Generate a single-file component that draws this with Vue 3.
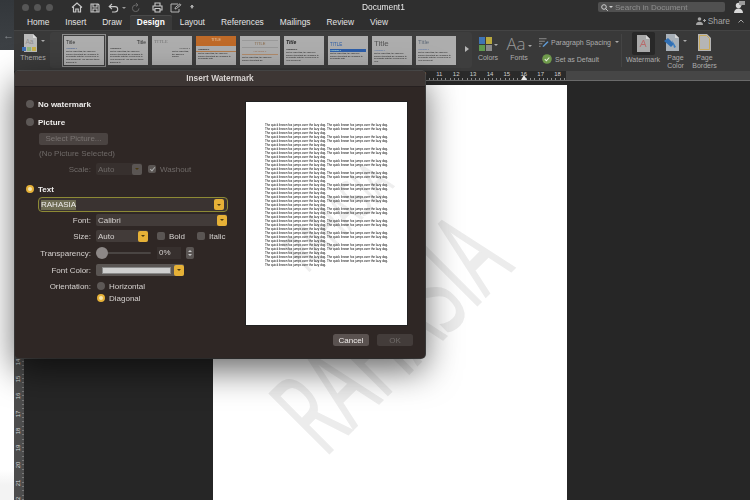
<script setup>
const tabs = ['Home', 'Insert', 'Draw', 'Design', 'Layout', 'References', 'Mailings', 'Review', 'View']
const body = 'On the Insert tab, the galleries include items that are designed to coordinate with the overall look of your document. You can use these galleries to insert tables, headers, footers, lists, cover pages and other blocks.'
// cut the sample text at a word so it fits inside the thumbnail
const excerpt = (len) => body.slice(0, body.lastIndexOf(' ', len))
const themes = [
  { key: 't1', title: 'Title', head: 'Heading 1', len: 150 },
  { key: 't2', title: 'Title', head: 'Heading 1', len: 150 },
  { key: 't3', title: 'TITLE', head: 'Heading 1', len: 45 },
  { key: 't4', title: 'TITLE', head: 'Heading 1', len: 85 },
  { key: 't5', title: 'TITLE', head: 'HEADING 1', len: 60 },
  { key: 't6', title: 'Title', head: 'Heading 1', len: 120 },
  { key: 't7', title: 'TITLE', head: 'Heading 1', len: 85 },
  { key: 't8', title: 'Title', head: 'Heading 1', len: 110 },
  { key: 't9', title: 'Title', head: 'Heading 1', len: 120 },
]
const sideRuler = [14, 15, 16, 17, 18, 19, 20, 21, 22]
const topRuler = [10, 11, 12, 13, 14, 15, 16, 17, 18]
const sentence = 'The quick brown fox jumps over the lazy dog. '
const paragraph = sentence.repeat(5)
</script>

<template>
  <div class="screen">
    <div class="behind">
      <div class="behind-top"><span class="back">←</span></div>
    </div>

    <div class="word">
      <div class="titlebar">
        <div class="lights"><i></i><i></i><i></i></div>
        <div class="quick">
          <svg width="12" height="11" viewBox="0 0 12 11" class="q-home"><path d="M1 5.500 6 1l5 4.500M2.500 5v5h2.300V7h2.400v3h2.300V5" fill="none" stroke="#c9c9c9" stroke-width="1.200"/></svg>
          <svg width="10" height="10" viewBox="0 0 10 10" class="q-save"><path d="M1 1h7l1 1v7H1zM3 1v3h4V1M3 9V6h4v3" fill="none" stroke="#c9c9c9" stroke-width="1.100"/></svg>
          <svg width="11" height="10" viewBox="0 0 11 10" class="q-undo"><path d="M4 1 1.200 3.600 4 6.200M1.500 3.600H7a2.700 2.700 0 0 1 0 5.400H4" fill="none" stroke="#c9c9c9" stroke-width="1.100"/></svg>
          <span class="q-caret"></span>
          <svg width="9" height="11" viewBox="0 0 9 11" class="q-redo"><path d="M5 1 7 3 5 4.500M6.800 3H4.500a3.300 3.300 0 1 0 3.500 3.400" fill="none" stroke="#6a6a6a" stroke-width="1"/></svg>
          <svg width="11" height="11" viewBox="0 0 11 11" class="q-print"><path d="M3 4V1h5v3M3 8H1V4h9v4H8M3 6.500h5V10H3z" fill="none" stroke="#c9c9c9" stroke-width="1.100"/></svg>
          <svg width="12" height="10" viewBox="0 0 12 10" class="q-edit"><path d="M8 1H1v8h8V6M5 6l.4-1.600L10 .8l1 1L6.500 5.600z" fill="none" stroke="#b5b5b5" stroke-width="1"/></svg>
          <span class="q-more"></span>
        </div>
        <div class="doc-name">Document1</div>
        <div class="search">
          <svg width="7" height="7" viewBox="0 0 7 7"><circle cx="3" cy="3" r="2.300" fill="none" stroke="#d0d0d0"/><path d="M4.700 4.700 6.800 6.800" stroke="#d0d0d0"/></svg>
          <span class="q-caret light"></span>
          <span>Search in Document</span>
        </div>
        <svg class="person" width="11" height="12" viewBox="0 0 11 12"><circle cx="4.500" cy="4.500" r="2.700" fill="#d8d8d8"/><path d="M0 12c0-3 2-4.500 4.500-4.500S9 9 9 12z" fill="#d8d8d8"/><path d="M5 0h6v4H8L6.500 5.500V4H5z" fill="#9a9a9a"/></svg>
      </div>

      <div class="tabbar">
        <span v-for="tab in tabs" :key="tab" class="tab" :class="{ active: tab === 'Design' }">{{ tab }}</span>
        <div class="share">
          <svg width="10" height="8" viewBox="0 0 10 8"><circle cx="3.500" cy="2" r="1.800" fill="#a5a5a5"/><path d="M0 8c0-2.500 1.500-3.200 3.500-3.200S7 5.500 7 8z" fill="#a5a5a5"/><path d="M7 3.500h3M8.500 2v3" stroke="#a5a5a5"/></svg>
          <span>Share</span>
          <svg class="chev" width="6" height="4" viewBox="0 0 6 4"><path d="M.5 3.500 3 1l2.500 2.500" fill="none" stroke="#a5a5a5"/></svg>
        </div>
      </div>

      <div class="ribbon">
        <div class="rgroup themes">
          <div class="ricon">
            <svg width="18" height="18" viewBox="0 0 18 18">
              <path d="M3 0h9l4 4v14H3z" fill="#b9b9b9"/><path d="M12 0v4h4" fill="#dcdcdc"/>
              <text x="4.500" y="10" font-size="6.500" fill="#8d8d8d" font-family="Liberation Sans, sans-serif">Aa</text>
              <rect x="1" y="13" width="4" height="4" fill="#3f6fb5"/><rect x="6" y="13" width="4" height="4" fill="#8fb47c"/><rect x="11" y="13" width="4" height="4" fill="#c8b04c"/>
            </svg>
            <span class="caret"></span>
          </div>
          <span class="rlabel">Themes</span>
        </div>

        <div class="gallery">
          <div v-for="t in themes" :key="t.key" class="thumb" :class="t.key">
            <div class="th-title">{{ t.title }}</div>
            <div class="th-head">{{ t.head }}</div>
            <div class="th-body">{{ excerpt(t.len) }}</div>
          </div>
          <span class="next"></span>
        </div>

        <div class="rgroup colors">
          <div class="ricon">
            <span class="swatches"><i class="s1"></i><i class="s2"></i><i class="s3"></i><i class="s4"></i></span>
            <span class="caret"></span>
          </div>
          <span class="rlabel">Colors</span>
        </div>

        <div class="rgroup fonts">
          <div class="ricon"><span class="aa">Aa</span><span class="caret"></span></div>
          <span class="rlabel">Fonts</span>
        </div>

        <div class="para">
          <div class="para-row">
            <svg width="12" height="11" viewBox="0 0 12 11"><path d="M0 1h9M0 4h7M0 7h4M0 10h2" stroke="#9a9a9a"/><path d="M4 10 10 4l1.500 1L5.500 10.800z" fill="#5f9bd6"/></svg>
            <span>Paragraph Spacing</span>
            <span class="caret"></span>
          </div>
          <div class="para-row second">
            <svg width="10" height="10" viewBox="0 0 10 10"><circle cx="5" cy="5" r="4.800" fill="#6f9a4c"/><path d="M2.800 5.200 4.400 6.800 7.300 3.500" fill="none" stroke="#e6f0dd" stroke-width="1.100"/></svg>
            <span>Set as Default</span>
          </div>
        </div>

        <div class="divider"></div>

        <div class="rgroup mark">
          <div class="mark-box">
            <svg width="13" height="17" viewBox="0 0 13 17"><path d="M0 0h9l4 4v13H0z" fill="#a9a9a9"/><path d="M9 0v4h4" fill="#d4d4d4"/><path d="M3 12 6.500 5 9 12M4 9.500h4" fill="none" stroke="#b86a6a"/></svg>
          </div>
          <span class="rlabel">Watermark</span>
        </div>

        <div class="rgroup pcolor">
          <div class="ricon">
            <svg width="15" height="17" viewBox="0 0 15 17"><path d="M2 0h9l4 4v13H2z" fill="#a8b0b8"/><path d="M11 0v4h4" fill="#d6d6d6"/><path d="M0 7l4-3 6 6-3 3z" fill="#2f6fb5"/><path d="M8 6l4 7-2 1z" fill="#3a7cc0"/></svg>
            <span class="caret"></span>
          </div>
          <span class="rlabel">Page<br>Color</span>
        </div>

        <div class="rgroup pborder">
          <div class="ricon">
            <svg width="13" height="17" viewBox="0 0 13 17"><path d="M0 0h9l4 4v13H0z" fill="#b5b5b5"/><path d="M1.500 1.500h7l3 3v11h-10z" fill="none" stroke="#c9a95a"/></svg>
          </div>
          <span class="rlabel">Page<br>Borders</span>
        </div>
      </div>

      <div class="hruler">
        <div class="hruler-dark">
          <span v-for="n in topRuler" :key="n" class="hcell">{{ n }}</span>
          <span class="marker"></span>
        </div>
      </div>

      <div class="workspace">
        <div class="vruler">
          <div v-for="n in sideRuler" :key="n" class="vcell"><span>{{ n }}</span></div>
        </div>
        <div class="canvas">
          <div class="page">
            <div class="stamp">RAHASIA</div>
          </div>
        </div>
      </div>
    </div>

    <div class="dialog">
      <div class="dlg-title">Insert Watermark</div>
      <div class="dlg-body">
        <div class="form">
          <div class="row r-none"><span class="radio"></span><b>No watermark</b></div>
          <div class="row r-picture"><span class="radio"></span><b>Picture</b></div>
          <div class="btn-select">Select Picture...</div>
          <div class="no-picture">(No Picture Selected)</div>
          <div class="row r-scale dim">
            <label class="lbl">Scale:</label>
            <div class="select sel-scale"><span>Auto</span><span class="arrow grey"><em></em></span></div>
            <span class="check on"></span><span>Washout</span>
          </div>

          <div class="row r-text"><span class="radio on"></span><b>Text</b></div>
          <div class="text-input"><span class="sel-text">RAHASIA</span><span class="arrow"><em></em></span></div>

          <div class="row r-font">
            <label class="lbl">Font:</label>
            <div class="select sel-font"><span>Calibri</span><span class="arrow"><em></em></span></div>
          </div>
          <div class="row r-size">
            <label class="lbl">Size:</label>
            <div class="select sel-size"><span>Auto</span><span class="arrow"><em></em></span></div>
            <span class="check c-bold"></span><span>Bold</span>
            <span class="check c-italic"></span><span>Italic</span>
          </div>
          <div class="row r-trans">
            <label class="lbl">Transparency:</label>
            <div class="slider"><span class="thumb-knob"></span></div>
            <div class="percent">0%</div>
            <div class="stepper"><i></i><i class="down"></i></div>
          </div>
          <div class="row r-color">
            <label class="lbl">Font Color:</label>
            <div class="select sel-color"><span class="color-bar"></span><span class="arrow"><em></em></span></div>
          </div>
          <div class="row r-orient">
            <label class="lbl">Orientation:</label>
            <span class="radio"></span><span>Horizontal</span>
          </div>
          <div class="row r-diag">
            <span class="lbl"></span>
            <span class="radio on"></span><span>Diagonal</span>
          </div>
        </div>

        <div class="side">
          <div class="preview">
            <div class="stamp small">RAHASIA</div>
            <p v-for="n in 12" :key="n">{{ paragraph }}</p>
          </div>
          <div class="actions">
            <button class="cancel">Cancel</button>
            <button class="ok">OK</button>
          </div>
        </div>
      </div>
    </div>
  </div>
</template>

<style>
html, body { margin: 0; background: #fff; }
</style>

<style scoped>
.screen {
  position: relative;
  display: flex;
  width: 750px;
  height: 500px;
  overflow: hidden;
  font-family: "Liberation Sans", Arial, sans-serif;
  filter: blur(0.4px);
}

.behind { width: 14px; background: linear-gradient(#fff 470px, #f3f3f3 485px); }
.behind-top { height: 50px; background: linear-gradient(#33373b, #3d4145); position: relative; }
.back { position: absolute; left: 3px; top: 29px; font-size: 11px; color: #8b8f93; }

.word { flex: 1; display: flex; flex-direction: column; min-width: 0; }

.titlebar { height: 15px; background: #2f2f2f; display: flex; align-items: center; position: relative; }
.lights { display: flex; gap: 5px; padding-left: 8px; }
.lights i { width: 7px; height: 7px; border-radius: 50%; background: #565656; }
.quick { display: flex; align-items: center; margin-left: 18px; }
.q-save { margin-left: 7px; }
.q-undo { margin-left: 8px; }
.q-caret { margin-left: 3px; border: 2px solid transparent; border-top: 2.500px solid #9b9b9b; border-bottom: 0; }
.q-caret.light { border-top-color: #d0d0d0; margin-left: 1px; margin-right: 2px; }
.q-redo { margin-left: 5px; }
.q-print { margin-left: 12px; }
.q-edit { margin-left: 7px; }
.q-more { margin-left: 8px; border: 2px solid transparent; border-top: 3px solid #aaa; border-bottom: 0; box-shadow: 0 -2px 0 -1px #aaa; }
.doc-name { position: absolute; left: 348px; top: 2px; font-size: 8.400px; line-height: 11px; color: #ededed; }
.search {
  position: absolute; left: 584px; top: 2px; width: 127px; height: 10px; box-sizing: border-box;
  display: flex; align-items: center; padding-left: 3px; border-radius: 2px;
  background: #505050; color: #8f8f8f; font-size: 8px;
}
.person { position: absolute; left: 720px; top: 1px; }

.tabbar { height: 15px; background: #2f2f2f; display: flex; align-items: flex-end; padding-left: 5px; position: relative; }
.tab { padding: 0 8px; height: 15px; line-height: 14px; font-size: 8.400px; color: #e4e4e4; box-sizing: border-box; }
.tab.active { background: #3a3a3a; color: #fff; font-weight: 700; border-radius: 2px 2px 0 0; box-shadow: inset 0 1px 0 #4a4a4a; padding: 0 7px; }
.share { position: absolute; right: 6px; top: 1px; display: flex; align-items: center; gap: 2px; color: #a5a5a5; font-size: 8.400px; }
.chev { margin-left: 6px; }

.ribbon { height: 41px; background: #393939; border-top: 1px solid #444; box-sizing: border-box; display: flex; }
.rgroup { display: flex; flex-direction: column; align-items: center; }
.ricon { height: 20px; margin-top: 3px; display: flex; align-items: flex-start; }
.rlabel { font-size: 7px; line-height: 7.500px; text-align: center; color: #adadad; white-space: nowrap; }
.caret { margin: 6px 0 0 2px; border: 2px solid transparent; border-top: 2.500px solid #aaa; border-bottom: 0; }

.themes { width: 30px; margin-left: 4px; }
.gallery {
  width: 422px; height: 36px; margin: 1px 0 0 2px; background: #3e3e3e; border-radius: 3px;
  display: flex; align-items: center; gap: 4px; padding-left: 14px; box-sizing: border-box; position: relative;
}
.next { position: absolute; right: 3px; top: 14px; border: 3.500px solid transparent; border-left: 4px solid #b5b5b5; border-right: 0; }

.thumb { width: 40px; height: 29px; background: #adadad; overflow: hidden; padding: 3px 2px 0; box-sizing: border-box; color: #222; flex: none; }
.th-title { font-size: 5px; line-height: 6px; color: #333; }
.th-head { font-size: 2.400px; line-height: 3.200px; color: #2f4f8f; margin-top: 2px; }
.th-body { font-size: 2.200px; line-height: 2.800px; color: #111; }
.t1 { outline: 1px solid #8a8a8a; outline-offset: 1px; }
.t2 .th-title { text-align: right; }
.t2 .th-head { color: #333; font-weight: 700; }
.t3 .th-title { font-family: "Liberation Serif", serif; color: #777; }
.t3 .th-head { text-align: right; margin-top: 2px; color: #444; }
.t3 .th-body { margin-left: 18px; }
.t4 { padding: 0; }
.t4 .th-title { background: #bf6a28; color: #e8c9a8; text-align: center; height: 10px; line-height: 9px; font-size: 3.500px; }
.t4 .th-head { color: #222; padding: 0 2px; margin-top: 2px; font-weight: 700; border-bottom: 1px solid #b07a4c; }
.t4 .th-body { padding: 0 2px; }
.t5 .th-title { text-align: center; color: #8a6a4a; border: solid #999; border-width: 1px 0; margin-top: 1px; font-size: 4px; }
.t5 .th-head { text-align: center; color: #9a6a4a; border-bottom: 1px solid #b08a6a; margin-top: 2px; padding-bottom: 1px; }
.t5 .th-body { margin-top: 1px; }
.t6 .th-title { font-weight: 700; font-style: italic; color: #222; }
.t6 .th-head { color: #222; font-weight: 700; margin-top: 3px; }
.t7 .th-title { color: #2d5ea8; font-size: 4.500px; margin-top: 3px; }
.t7 .th-head { background: #2d5ea8; color: #cfe; margin-top: 1px; }
.t8 .th-title { font-size: 8px; line-height: 9px; color: #555; }
.t8 .th-head { color: #4a6aa8; margin-top: 1px; }
.t9 .th-title { font-size: 6px; line-height: 7px; color: #5f6a78; }
.t9 .th-head { color: #4a6aa8; margin-top: 2px; }

.colors { width: 24px; margin-left: 4px; }
.swatches { display: grid; grid-template-columns: 6px 6px; grid-template-rows: 6.500px 6.500px; gap: 1px; margin-top: 3px; }
.swatches i { display: block; }
.s1 { background: #3f74b5; }
.s2 { background: #b9a93f; }
.s3 { background: #5f9a4f; }
.s4 { background: #8a8a8a; }
.fonts { width: 28px; margin-left: 5px; }
.aa { font-size: 17px; line-height: 19px; color: #9a9a9a; font-weight: 300; font-family: "Open Sans", sans-serif; }
.fonts .caret { margin-top: 11px; }
.colors .caret { margin-top: 10px; }
.para { margin-left: 6px; width: 80px; color: #adadad; font-size: 7px; padding-top: 5px; white-space: nowrap; }
.para-row { display: flex; align-items: center; gap: 2px; height: 12px; }
.para-row .caret { margin: 0 0 0 2px; }
.para-row.second { margin-top: 5px; padding-left: 3px; gap: 3px; }
.divider { width: 1px; height: 33px; margin: 3px 4px 0 2px; background: #444; }
.mark { width: 34px; }
.mark-box { width: 23px; height: 23px; margin: 1px 0 1px; background: #282828; border-radius: 2px; display: flex; align-items: center; justify-content: center; }
.pcolor { width: 27px; margin-left: 2px; }
.pcolor .caret { margin-left: 4px; }
.pborder { width: 26px; margin-left: 2.500px; }

.hruler { height: 10px; background: #464646; border-bottom: 1px solid #6a6a6a; box-sizing: border-box; }
.hruler-dark {
  width: 552px; height: 9px; display: flex; justify-content: flex-end; position: relative;
  background: #2a2a2a repeating-linear-gradient(90deg, #8a8a8a 0 1px, transparent 1px 4.230px) 0 7px / 100% 2px no-repeat;
}
.hcell { width: 16.900px; text-align: center; font-size: 6px; line-height: 7px; color: #cfcfcf; flex: none; }
.marker { position: absolute; left: 507px; top: 4px; border: 3px solid transparent; border-bottom: 5px solid #e6e6e6; border-top: 0; }

.workspace { flex: 1; display: flex; background: #262626; min-height: 0; }
.vruler {
  width: 10px; padding-top: 272px; box-sizing: border-box; overflow: hidden;
  background: #4c4c4c repeating-linear-gradient(0deg, #7a7a7a 0 1px, transparent 1px 4.320px) right top / 2px 100% no-repeat;
}
.vcell { height: 17.300px; display: flex; align-items: center; justify-content: center; font-size: 6px; color: #d8d8d8; padding-right: 2px; }
.vcell span { transform: rotate(-90deg); }
.canvas { flex: 1; padding: 4px 0 0 189px; min-width: 0; }
.page { width: 354px; height: 420px; background: #fff; position: relative; overflow: hidden; }
.stamp {
  position: absolute; left: 175px; top: 246px; transform: translate(-50%, -50%) rotate(-45deg) scaleX(0.56);
  font-family: "Open Sans", sans-serif; font-weight: 500; font-size: 118px; line-height: 1; color: #ececec; white-space: nowrap;
  -webkit-text-stroke: 2px #ececec;
}
.stamp.small { left: 90px; top: 113px; font-size: 54px; color: #eeeeee; -webkit-text-stroke: 1px #eeeeee; }

.dialog {
  position: absolute; left: 15px; top: 71px; width: 410px; height: 287px; border-radius: 4px;
  background: #2f2725; box-shadow: 0 12px 34px rgba(0, 0, 0, 0.6), 0 0 0 1px #4e4e4e;
  display: flex; flex-direction: column;
}
.dlg-title { height: 16px; line-height: 15px; text-align: center; background: #3d3634; border-radius: 4px 4px 0 0; color: #d8d3d1; font-size: 8.300px; font-weight: 700; border-bottom: 1px solid #262020; box-sizing: border-box; }
.dlg-body { flex: 1; display: flex; }
.form { width: 231px; padding: 11px 0 0 11px; box-sizing: border-box; color: #d6d2d0; font-size: 8px; }
.row { display: flex; align-items: center; height: 12px; }
.row b { color: #eeeceb; font-weight: 700; margin-left: 4px; }
.radio { width: 8px; height: 8px; border-radius: 50%; background: #5d5856; flex: none; box-sizing: border-box; }
.radio.on { background: #f6e6b0; border: 2.500px solid #e6b137; }
.r-picture { margin-top: 6px; }
.btn-select { width: 69px; height: 12px; margin: 5px 0 0 13px; border-radius: 2px; background: #4a4341; color: #7a7472; line-height: 12px; text-align: center; }
.no-picture { margin: 4px 0 0 13px; height: 10px; line-height: 10px; color: #6f6a68; }
.dim { color: #6f6a68; }
.r-scale { margin-top: 3px; height: 14px; }
.lbl { width: 52px; margin-left: 13px; margin-right: 5px; text-align: right; flex: none; white-space: nowrap; }
.select { display: flex; align-items: center; justify-content: space-between; height: 12px; background: #423b39; border-radius: 2px; padding-left: 2px; box-sizing: border-box; color: #d6d2d0; }
.sel-scale { width: 46px; background: #37302e; color: #6f6a68; margin-right: 6px; }
.arrow { width: 10px; height: 11px; background: #e6b137; border-radius: 2px; display: flex; align-items: center; justify-content: center; flex: none; }
.arrow.grey { background: #5a5553; }
.arrow em { border: 2px solid transparent; border-top: 2.500px solid #4a3a10; border-bottom: 0; }
.check { width: 8px; height: 8px; border-radius: 2px; background: #5a5553; margin-right: 4px; flex: none; }
.check.on { position: relative; }
.check.on::after { content: ''; position: absolute; left: 2.500px; top: 1px; width: 2px; height: 4px; border: solid #aaa; border-width: 0 1px 1px 0; transform: rotate(40deg); }
.r-text { margin-top: 7px; }
.text-input {
  width: 190px; height: 15px; margin: 2px 0 0 12px; padding: 0 3px 0 2px; box-sizing: border-box;
  display: flex; align-items: center; justify-content: space-between;
  background: #3a3331; border: 1.500px solid #8d8a35; border-radius: 4px; color: #eeeceb;
}
.sel-text { background: #6f6d54; line-height: 10px; }
.r-font { margin-top: 2px; }
.sel-font { width: 131px; }
.r-size { margin-top: 4px; }
.sel-size { width: 52px; margin-right: 9px; }
.c-italic { margin-left: 12px; }
.r-trans { margin-top: 5px; }
.slider { width: 55px; height: 2px; background: #4a4543; position: relative; margin-right: 6px; border-radius: 1px; }
.thumb-knob { position: absolute; left: 0; top: -5px; width: 12px; height: 12px; border-radius: 50%; background: #8d8887; }
.percent { width: 24px; height: 12px; line-height: 12px; background: #37302e; padding-left: 2px; box-sizing: border-box; margin-right: 5px; }
.stepper { width: 8px; height: 12px; border-radius: 2px; background: #5a5553; display: flex; flex-direction: column; align-items: center; justify-content: center; gap: 1.500px; }
.stepper i { border: 2px solid transparent; border-bottom: 2px solid #c5c5c5; border-top: 0; }
.stepper i.down { border-bottom: 0; border-top: 2px solid #c5c5c5; }
.r-color { margin-top: 5px; }
.sel-color { width: 88px; background: #5a5553; padding-left: 6px; }
.color-bar { width: 69px; height: 7px; background: #cfcfcf; border: 1px solid #8a8a8a; box-sizing: border-box; }
.r-orient { margin-top: 4px; }
.r-orient .radio, .r-diag .radio { margin-right: 4px; margin-left: 1px; }

.side { display: flex; flex-direction: column; padding-top: 15px; }
.preview { width: 161px; height: 223px; background: #fff; padding: 21px 0 0 19px; box-sizing: border-box; position: relative; overflow: hidden; box-shadow: 0 0 0 1px #222; }
.preview p { position: relative; width: 124px; height: 12px; margin: 0; font-size: 3.050px; line-height: 4px; color: #000; overflow: hidden; }
.actions { display: flex; justify-content: flex-end; gap: 8px; margin: 9px -6px 0 0; }
.actions button { width: 36px; height: 12px; padding: 0; border: 0; border-radius: 2.500px; font: 8px "Liberation Sans", sans-serif; }
.cancel { background: #5a5250; color: #eeeae8; }
.ok { background: #433c3a; color: #6f6a68; }
</style>
